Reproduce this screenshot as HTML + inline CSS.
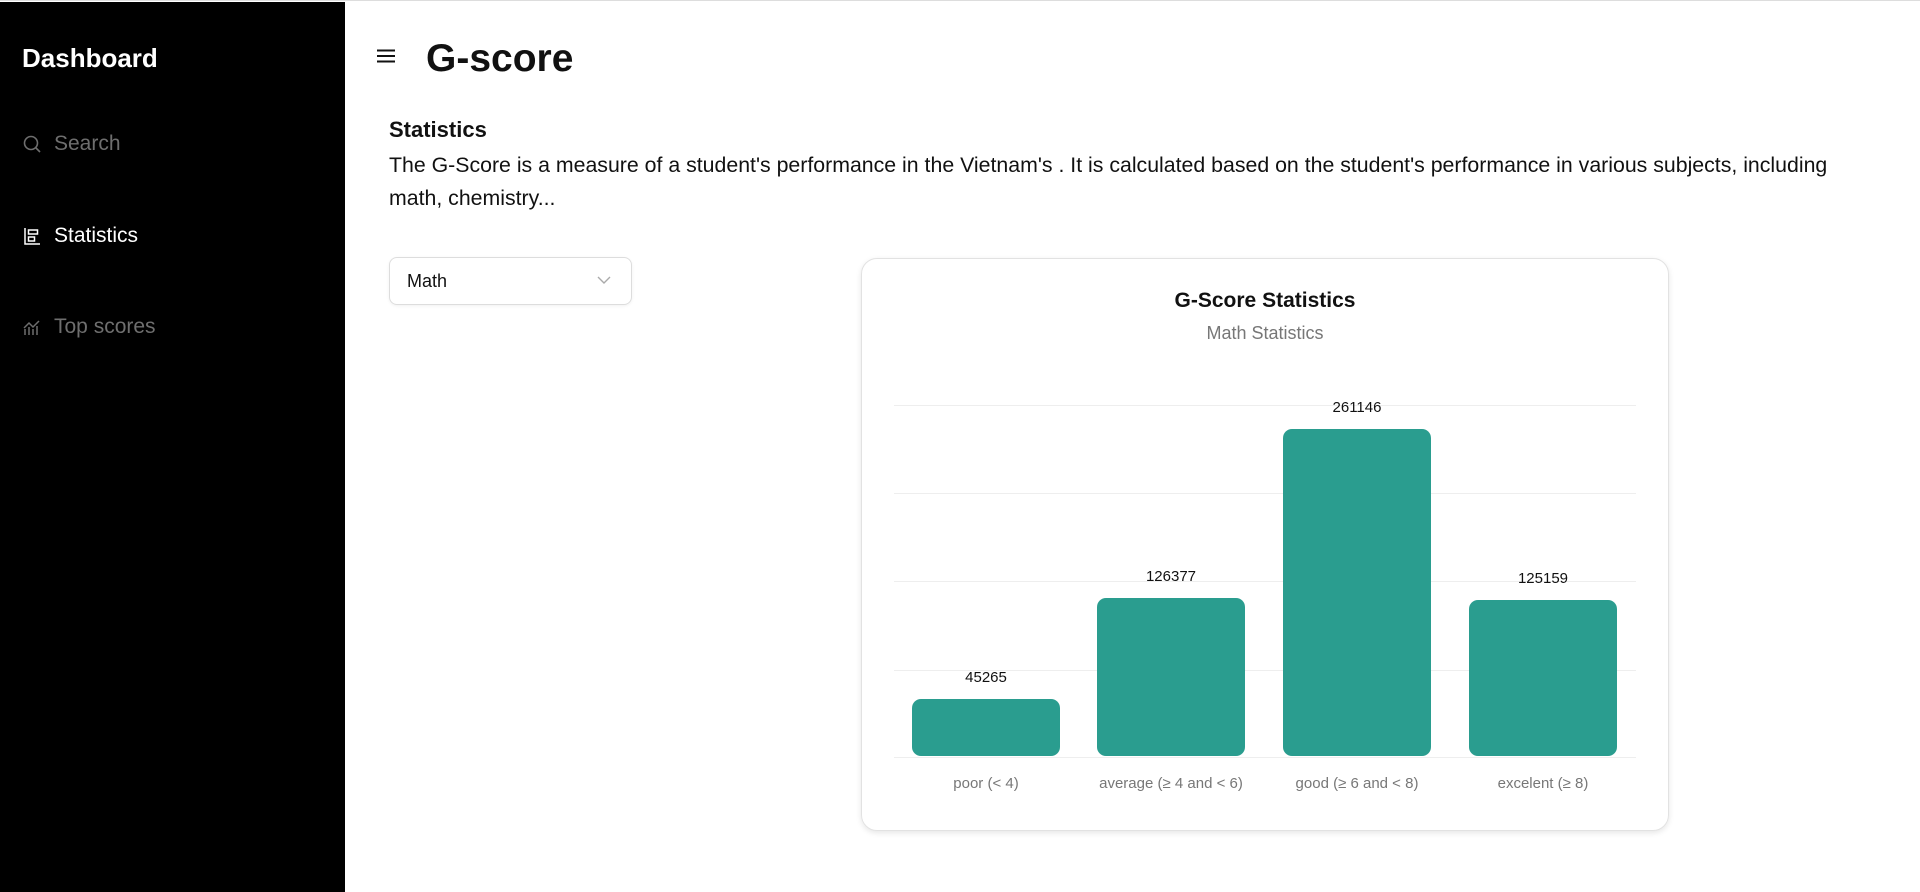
<!DOCTYPE html>
<html><head><meta charset="utf-8"><style>
*{margin:0;padding:0;box-sizing:border-box}
body{width:1920px;height:891px;background:#fff;font-family:"Liberation Sans",sans-serif;position:relative;overflow:hidden;border-top:1px solid #ddd}
.sb{position:absolute;left:0;top:1px;width:345px;height:890px;background:#000}
.a{position:absolute;white-space:nowrap}
.nav{position:absolute;left:22px;font-size:21px;color:#6e6e6e;display:flex;align-items:center;gap:12px}
.nav svg{width:20px;height:20px}
.bar{position:absolute;background:#2a9d8f;border-radius:9px;width:148px;bottom:135px}
.gl{position:absolute;left:894px;width:742px;height:1px;background:#eee}
.v{position:absolute;font-size:15px;color:#111;width:148px;text-align:center}
.xl{position:absolute;top:774px;font-size:15px;color:#777;width:186px;text-align:center}
</style></head><body>
<div class="sb">
<div class="a" style="left:22px;top:41px;font-size:26px;font-weight:bold;color:#fff">Dashboard</div>
<div class="nav" style="top:130px"><svg viewBox="0 0 20 20" fill="none" stroke="#6e6e6e" stroke-width="1.6"><circle cx="9" cy="9" r="6.5"/><path d="M14 14l4 4"/></svg>Search</div>
<div class="nav" style="top:222px;color:#fff"><svg viewBox="0 0 20 20" fill="none" stroke="#fff" stroke-width="1.5"><path d="M3 2v16h15"/><rect x="6.5" y="4" width="9" height="4"/><rect x="6.5" y="11" width="6" height="4"/></svg>Statistics</div>
<div class="nav" style="top:313px"><svg viewBox="0 0 20 20" fill="none" stroke="#6e6e6e" stroke-width="1.5"><path d="M3 18v-6M7 18v-8M11 18v-6M15 18v-9M2 11l5-5 4 4 6-6"/></svg>Top scores</div>
</div>
<svg class="a" style="left:377px;top:48px" width="18" height="14" viewBox="0 0 18 14"><path d="M0 1.5h18M0 7h18M0 12.5h18" stroke="#111" stroke-width="2"/></svg>
<div class="a" style="left:426px;top:36px;font-size:39px;font-weight:bold;color:#111">G-score</div>
<div class="a" style="left:389px;top:116px;font-size:22px;font-weight:bold;color:#111">Statistics</div>
<div class="a" style="left:389px;top:148px;font-size:21.3px;line-height:33px;color:#111;white-space:normal;width:1470px">The G-Score is a measure of a student's performance in the Vietnam's . It is calculated based on the student's performance in various subjects, including math, chemistry...</div>
<div class="a" style="left:389px;top:256px;width:243px;height:48px;border:1px solid #ddd;border-radius:8px;box-shadow:0 1px 3px rgba(0,0,0,.06)">
<span style="position:absolute;left:17px;top:13px;font-size:18px;color:#111">Math</span>
<svg style="position:absolute;right:20px;top:18px" width="14" height="9" viewBox="0 0 14 9"><path d="M1 1l6 6 6-6" fill="none" stroke="#aaa" stroke-width="1.4"/></svg>
</div>
<div class="a" style="left:861px;top:257px;width:808px;height:573px;border:1px solid #e2e2e2;border-radius:16px;box-shadow:0 2px 6px rgba(0,0,0,.1)"></div>
<div class="a" style="left:861px;width:808px;text-align:center;top:288px;font-size:21px;font-weight:bold;color:#111">G-Score Statistics</div>
<div class="a" style="left:861px;width:808px;text-align:center;top:322px;font-size:18px;color:#777">Math Statistics</div>
<div class="gl" style="top:404px"></div><div class="gl" style="top:492px"></div><div class="gl" style="top:580px"></div><div class="gl" style="top:669px"></div><div class="gl" style="top:756px"></div>
<div class="bar" style="left:912px;height:57px"></div>
<div class="bar" style="left:1097px;height:158px"></div>
<div class="bar" style="left:1283px;height:327px"></div>
<div class="bar" style="left:1469px;height:156px"></div>
<div class="v" style="left:912px;top:668px">45265</div>
<div class="v" style="left:1097px;top:567px">126377</div>
<div class="v" style="left:1283px;top:398px">261146</div>
<div class="v" style="left:1469px;top:569px">125159</div>
<div class="xl" style="left:893px">poor (&lt; 4)</div>
<div class="xl" style="left:1078px">average (≥ 4 and &lt; 6)</div>
<div class="xl" style="left:1264px">good (≥ 6 and &lt; 8)</div>
<div class="xl" style="left:1450px">excelent (≥ 8)</div>
</body></html>
